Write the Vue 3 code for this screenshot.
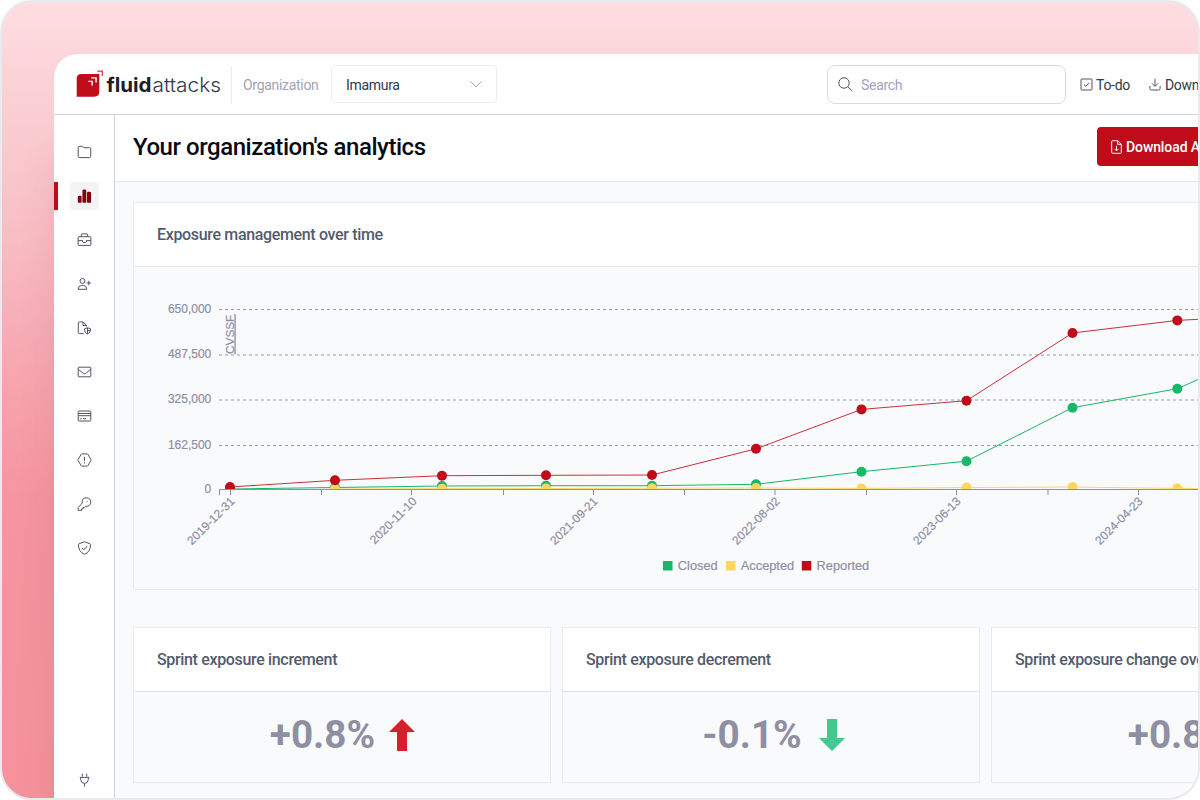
<template>
  <div class="frame">
    <div class="window">
      <header class="topbar">
        <svg class="logo" width="146" height="34" viewBox="0 0 146 34">
          <path class="logo-box" d="M6.5 7H24.3V24.5Q24.3 29.7 19.1 29.7H1.7V11.8Q1.7 7 6.5 7z" />
          <path class="logo-mark" d="M13.2 14.4h4v4M16.3 10.9h4.8v4.5" />
          <path class="logo-corner" d="M22.2 4.2h5.1v4.9" />
          <text class="logo-bold" x="31.5" y="24.6" textLength="45" lengthAdjust="spacingAndGlyphs">fluid</text>
          <text class="logo-light" x="77.5" y="24.6" textLength="68.5" lengthAdjust="spacingAndGlyphs">attacks</text>
        </svg>
        <span class="divider"></span>
        <span class="org-label">Organization</span>
        <button class="select">
          <span>Imamura</span>
          <svg class="line" width="14" height="14" viewBox="0 0 14 14"><path d="M1.3 4.2L7 9.9l5.7-5.7" /></svg>
        </button>
        <div class="search">
          <svg class="line" width="15" height="15" viewBox="0 0 15 15">
            <circle cx="6" cy="6" r="5.2" />
            <path d="M9.8 9.8l4.5 4.3" />
          </svg>
          <span>Search</span>
        </div>
        <div class="action todo">
          <svg class="line" width="13" height="13" viewBox="0 0 13 13">
            <rect x="1" y="1" width="11" height="11" rx=".8" />
            <path d="M4 6.6l1.8 1.7L9 4.8" />
          </svg>
          <span>To-do</span>
        </div>
        <div class="action">
          <svg class="line" width="12" height="13" viewBox="0 0 12 13">
            <path d="M6 .8v7.4M3 5.4l3 3 3-3M.9 8v2.6q0 1.4 1.4 1.4h7.4q1.4 0 1.4-1.4V8" />
          </svg>
          <span>Downloads</span>
        </div>
      </header>

      <div class="body">
        <nav class="sidebar">
          <button
            v-for="item in menu"
            :key="item.name"
            class="nav-item"
            :class="{ active: item.name === current, bottom: item.name === 'integrations' }"
            @click="current = item.name"
          >
            <svg class="line" width="15" height="14" viewBox="-.5 0 15 14">
              <path :class="{ solid: item.solid }" :d="item.path" />
            </svg>
          </button>
        </nav>

        <main class="main">
          <section class="title-bar">
            <h1>Your organization's analytics</h1>
            <button class="download">
              <svg class="line" width="11" height="14" viewBox="0 0 11 14">
                <path d="M1.5.7h5.3l3.5 3.5v8.3q0 .8-.8.8h-8q-.8 0-.8-.8v-11q0-.8.8-.8zM6.7.8v3.5h3.5M5.5 5.8v5M3.5 8.9l2 2 2-2" />
              </svg>
              <span>Download Analytics</span>
            </button>
          </section>

          <section class="content">
            <article class="card chart-card">
              <h2>Exposure management over time</h2>
              <svg class="chart" width="1080" height="322" viewBox="134 267 1080 322">
                <defs>
                  <clipPath id="plot"><rect x="219" y="300" width="990" height="189.5" /></clipPath>
                </defs>
                <g class="grid">
                  <line v-for="t in yTicks" :key="t.label" x1="219" x2="1214" :y1="t.y" :y2="t.y" />
                </g>
                <g class="labels y-labels">
                  <text v-for="t in yTicks" :key="t.label" x="211.3" :y="t.y + 3">{{ t.label }}</text>
                  <text x="211.3" y="493">0</text>
                </g>
                <text class="labels unit" transform="translate(233.5 354) rotate(-90)">CVSSF</text>
                <g clip-path="url(#plot)">
                  <g v-for="s in series" :key="s.name" :class="s.name.toLowerCase()">
                    <polyline :points="linePoints(s.values)" />
                  </g>
                  <g v-for="s in series" :key="s.name" :class="s.name.toLowerCase()">
                    <template v-for="(y, i) in s.values" :key="i">
                      <circle v-if="i < 10" :cx="xs[i]" :cy="y" r="5" />
                    </template>
                  </g>
                </g>
                <path class="axis" d="M219.5 495V489.5H1214" />
                <line v-for="x in xTicks" :key="x" class="axis" :x1="x" :x2="x" y1="489.5" y2="495" />
                <g class="labels x-labels">
                  <text v-for="d in dates" :key="d.label" :transform="`translate(${d.x + 5} 502) rotate(-45)`">{{ d.label }}</text>
                </g>
                <g v-for="l in legend" :key="l.name" class="labels legend" :class="l.name.toLowerCase()">
                  <rect :x="l.x" y="561" width="9.5" height="9.5" />
                  <text :x="l.x + 14.8" y="570.3">{{ l.name }}</text>
                </g>
              </svg>
            </article>

            <div class="cards">
              <article v-for="c in cards" :key="c.title" class="card small-card">
                <h2>{{ c.title }}</h2>
                <div class="value" :class="{ falling: c.trend === 'down' }">
                  <span>{{ c.value }}</span>
                  <svg :class="c.trend" width="26" height="32" viewBox="0 0 26 32">
                    <path d="M13 0L26 13H18V32H8V13H0z" />
                  </svg>
                </div>
              </article>
            </div>
          </section>
        </main>
      </div>
    </div>
  </div>
</template>

<script setup>
import { ref } from 'vue'

const current = ref('analytics')

const menu = [
  { name: 'groups', path: 'M1.6 1.3h3.2q.5 0 .8.5l.7.9h5.9q1 0 1 1v7.9q0 1-1 1H1.7q-1 0-1-1V2.3q0-1 .9-1z' },
  { name: 'analytics', solid: true, path: 'M.3 8q0-1.3 1.3-1.3H2.8q1.3 0 1.3 1.3V13q0 .7-.7.7H1Q.3 13.7.3 13zM4.900 1.8Q4.9.5 6.2.5h1.3q1.3 0 1.3 1.3V13q0 .7-.7.7H5.6q-.7 0-.7-.7zM9.5 4q0-1.3 1.3-1.3h1.5q1.3 0 1.3 1.3V13q0 .7-.7.7h-2.7q-.7 0-.7-.7z' },
  { name: 'policies', path: 'M1.5 3.7h11q.9 0 .9.9v6.9q0 .9-.9.9h-11q-.9 0-.9-.9V4.6q0-.9.9-.9zM3.8 3.6V1.7q0-.8.8-.8h4.8q.8 0 .8.8v1.9M.7 7.6H5M9 7.6h4.3M5 7.3v1.4q0 .6.6.6h2.8q.6 0 .6-.6V7.3' },
  { name: 'stakeholders', path: 'M5 1.5a2.4 2.4 0 1 1 0 4.9a2.4 2.4 0 1 1 0-4.9M.6 12.3Q.8 8.6 4.1 8.4h2q3 .2 3.2 3.9zM11.3 3.8v4.4M9.1 6h4.4' },
  { name: 'portfolios', path: 'M6 12.6H2q-1.2 0-1.2-1.2V2Q.8.9 2 .9h3.6L9 4.3v1.2M5.5 1v3.5H9M10 6.7l3.2 1.2q0 3.9-3.2 5.2-3.2-1.3-3.2-5.2zM10 7v6M10 9.5h3' },
  { name: 'outside', path: 'M1.5 2.2h11q.8 0 .8.8v8q0 .8-.8.8h-11q-.8 0-.8-.8V3q0-.8.8-.8zM.9 4.4L6 8.5q1 .7 2 0l5.1-4.1' },
  { name: 'billing', path: 'M1.5 2h11q.8 0 .8.8v8.4q0 .8-.8.8h-11q-.8 0-.8-.8V2.8q0-.8.8-.8zM.8 4.5h12.4M.8 6.7h12.4M2.8 9.7h1.5M5.5 9.7h3' },
  { name: 'alerts', path: 'M4.4.9h5.2q.6 0 .9.6l2.8 4.9q.3.6 0 1.2l-2.8 4.9q-.3.6-.9.6H4.4q-.6 0-.9-.6L.7 7.6q-.3-.6 0-1.2l2.8-4.9q.3-.6.9-.6zM7 3.8v4.3M7 9.3v1.2' },
  { name: 'credentials', path: 'M4.7 6.2Q3.9 1 8.8.8q4.4.2 4.5 4.4-.4 4.3-5 4.1L7 10.5H5.5V12H4v1.3H.7v-2.8zM9.7 4v.8' },
  { name: 'compliance', path: 'M7 .8l5.5 2q.6.3.6 1Q12.9 10.9 7 13.3 1.1 10.9.9 3.8q0-.7.6-1zM4.3 6.9l1.9 1.9 3.5-3.7' },
  { name: 'integrations', path: 'M4.8.7v3M9.2.7v3M2.2 4.4h9.6M3.2 4.5v2.2Q3.5 10.3 7 10.5q3.5-.2 3.8-3.8V4.5M7 10.6v3' }
]

const yTicks = [
  { label: '650,000', y: 309.5 },
  { label: '487,500', y: 355 },
  { label: '325,000', y: 400 },
  { label: '162,500', y: 445.5 }
]

const xs = [230, 335, 442, 546, 652, 756, 861.5, 966.5, 1072.5, 1177.3, 1214]
const xTicks = [230.5, 321.5, 411.5, 503.5, 593.5, 684.5, 775, 866.5, 956.5, 1048, 1138.5]

const series = [
  { name: 'Closed', values: [489, 487.5, 486, 485.7, 485.7, 484.3, 471.7, 461.2, 407.7, 388.7, 372.5] },
  { name: 'Accepted', values: [493, 489, 488.7, 488.5, 488.2, 488, 488.4, 487.5, 487, 488.4, 488.5] },
  { name: 'Reported', values: [487, 480.3, 475.7, 475.3, 475, 448.8, 409.4, 400.7, 333, 320.4, 318.5] }
]

const dates = [
  { label: '2019-12-31', x: 230.5 },
  { label: '2020-11-10', x: 412.5 },
  { label: '2021-09-21', x: 593.5 },
  { label: '2022-08-02', x: 775.5 },
  { label: '2023-06-13', x: 956.5 },
  { label: '2024-04-23', x: 1138.5 }
]

const legend = [
  { name: 'Closed', x: 663 },
  { name: 'Accepted', x: 726 },
  { name: 'Reported', x: 801.8 }
]

const cards = [
  { title: 'Sprint exposure increment', value: '+0.8%', trend: 'up' },
  { title: 'Sprint exposure decrement', value: '-0.1%', trend: 'down' },
  { title: 'Sprint exposure change overall', value: '+0.8%', trend: 'up' }
]

const linePoints = (values) => values.map((y, i) => `${xs[i]},${y}`).join(' ')
</script>

<style>
body {
  background: #fff;
  overflow: hidden;
}
</style>

<style scoped>
.frame {
  box-sizing: border-box;
  width: 1200px;
  height: 800px;
  padding: 52px 0 0 52px;
  border: 2px solid #e9eaee;
  border-radius: 32px;
  overflow: hidden;
  background: linear-gradient(180deg, #fedee1 0%, #fbd2d6 10%, #f9c5cb 23%, #f7a8b1 45%, #f5959f 62%, #f5929b 100%);
  font-family: Roboto, "Liberation Sans", sans-serif;
}

.window {
  display: flex;
  flex-direction: column;
  width: 1160px;
  height: 744px;
  border-radius: 24px 0 0 0;
  background: #fff;
  box-shadow: 0 90px 36px rgba(130, 50, 70, 0.12);
}

button {
  font: inherit;
  letter-spacing: inherit;
  margin: 0;
  cursor: pointer;
}

.line {
  flex: none;
  fill: none;
  stroke: #535365;
  stroke-width: 1;
  stroke-linejoin: round;
}

.topbar {
  display: flex;
  flex: none;
  align-items: center;
  box-sizing: border-box;
  height: 61px;
  padding-left: 21px;
  border-bottom: 1px solid #d2d2dd;
  border-radius: 24px 0 0 0;
  font-size: 14px;
  letter-spacing: -0.3px;
  color: #2f394b;
  white-space: nowrap;
}

.topbar > * {
  flex: none;
}

.topbar span {
  position: relative;
  top: 0.5px;
}

.logo-box {
  fill: #bf0b1a;
}

.logo-mark {
  fill: none;
  stroke: #fff;
  stroke-width: 1.4;
}

.logo-corner {
  fill: none;
  stroke: #d33a45;
  stroke-width: 1.3;
}

.logo text {
  font-family: Inter, sans-serif;
  font-size: 19.5px;
  letter-spacing: 0;
}

.logo-bold {
  font-weight: 700;
  fill: #1d1d2b;
}

.logo-light {
  font-weight: 300;
  fill: #2f394b;
}

.divider {
  width: 1px;
  height: 38px;
  margin: 0 11px 0 10px;
  background: #ececf1;
}

.org-label {
  width: 88px;
  color: #a3a3b5;
}

.select {
  display: flex;
  align-items: center;
  justify-content: space-between;
  box-sizing: border-box;
  width: 166px;
  height: 38px;
  padding: 0 13px 0 14px;
  border: 1px solid #ececf1;
  border-radius: 4px;
  background: #fff;
  color: #2f394b;
}

.select .line {
  stroke: #a3a3b5;
}

.search {
  display: flex;
  align-items: center;
  gap: 8px;
  box-sizing: border-box;
  width: 239px;
  height: 39px;
  margin: 0 14px 0 330px;
  padding-left: 10px;
  border: 1px solid #d9d9e2;
  border-radius: 8px;
  color: #a3a3b5;
}

.action {
  display: flex;
  align-items: center;
  gap: 4px;
}

.todo {
  gap: 3px;
  margin-right: 19px;
}

.body {
  display: flex;
  flex: 1;
  min-height: 0;
}

.sidebar {
  display: flex;
  flex-direction: column;
  flex: none;
  gap: 16px;
  box-sizing: border-box;
  width: 61px;
  padding: 23px 0 4px;
  border-right: 1px solid #d2d2dd;
}

.nav-item {
  position: relative;
  display: flex;
  align-items: center;
  justify-content: center;
  width: 29px;
  height: 28px;
  margin-left: 16px;
  padding: 0;
  border: none;
  border-radius: 4px;
  background: none;
}

.nav-item.active {
  background: #f4f4f6;
}

.nav-item.active::before {
  content: '';
  position: absolute;
  left: -16px;
  top: 0;
  width: 4px;
  height: 28px;
  background: #bf0b1a;
}

.nav-item.bottom {
  margin-top: auto;
}

.solid {
  fill: #7f0410;
  stroke: none;
}

.main {
  flex: 1;
  min-width: 0;
  background: #f9fafc;
}

.title-bar {
  display: flex;
  align-items: center;
  justify-content: space-between;
  box-sizing: border-box;
  height: 67px;
  padding: 0 0 3px 18px;
  border-bottom: 1px solid #e6e7ec;
  background: #fff;
}

h1 {
  margin: 0;
  font-size: 24px;
  font-weight: 500;
  letter-spacing: -0.45px;
  color: #0b0b14;
}

.download {
  display: flex;
  flex: none;
  align-items: center;
  gap: 4px;
  box-sizing: border-box;
  width: 117px;
  height: 39px;
  padding: 0 0 0 14px;
  border: none;
  border-radius: 4px;
  background: #bf0b1a;
  color: #fff;
  font-size: 14px;
  font-weight: 500;
  letter-spacing: -0.1px;
  white-space: nowrap;
}

.download .line {
  stroke: #fff;
}

.content {
  display: flex;
  flex-direction: column;
  gap: 37px;
  padding: 20px 0 0 18px;
}

.card {
  box-sizing: border-box;
  border: 1px solid #e9eaee;
}

.card h2 {
  box-sizing: border-box;
  height: 64px;
  margin: 0;
  padding-left: 23px;
  border-bottom: 1px solid #e2e3e8;
  background: #fff;
  font-size: 16px;
  font-weight: 500;
  letter-spacing: -0.34px;
  line-height: 63px;
  color: #535b6c;
  white-space: nowrap;
}

.chart-card {
  height: 388px;
  overflow: hidden;
}

.chart {
  display: block;
}

.grid line {
  stroke: #9a9aa8;
  stroke-width: 1;
  stroke-dasharray: 3 3;
}

.labels {
  font-family: "Liberation Sans", Arial, sans-serif;
  font-size: 12px;
  fill: #8f8fa3;
}

.labels text,
.unit {
  stroke: #8f8fa3;
  stroke-width: 0.2;
}

.y-labels,
.x-labels {
  text-anchor: end;
}

.unit {
  font-size: 11.8px;
  text-decoration: underline;
}

.axis {
  fill: none;
  stroke: #8f8fa3;
  stroke-width: 1;
}

polyline {
  fill: none;
  stroke-width: 1;
}

.closed circle,
.closed rect {
  fill: #17b86a;
}

.closed polyline {
  stroke: #17b86a;
}

.accepted circle,
.accepted rect {
  fill: #ffd562;
}

.accepted polyline {
  stroke: #ffd562;
}

.reported circle,
.reported rect {
  fill: #bf0b1a;
}

.reported polyline {
  stroke: #cc2f3b;
}

.legend text {
  font-size: 12.8px;
}

.cards {
  display: flex;
  gap: 11px;
}

.small-card {
  flex: none;
  width: 418px;
  height: 156px;
}

.value {
  display: flex;
  align-items: center;
  justify-content: center;
  gap: 14px;
  height: 86px;
  padding-left: 1px;
  font-size: 38.7px;
  font-weight: 700;
  color: #8f8fa3;
}

.value span {
  position: relative;
  top: -1px;
}

.value.falling {
  gap: 17px;
  padding-left: 5px;
}

.up {
  fill: #d4212b;
}

.down {
  fill: #43c990;
  transform: rotate(180deg);
}
</style>
